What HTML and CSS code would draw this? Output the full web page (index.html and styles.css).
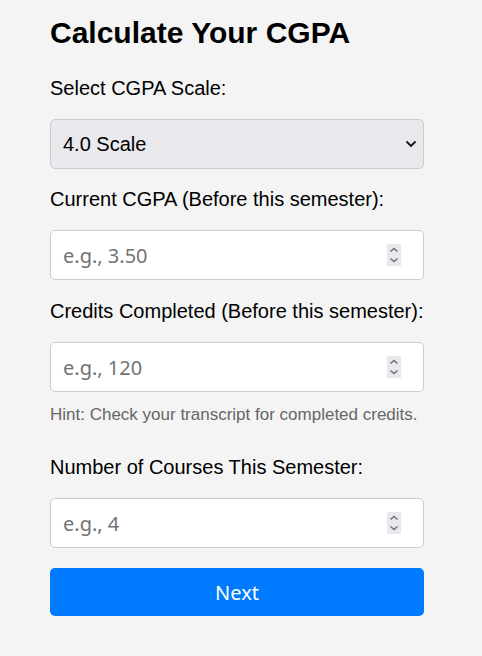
FILE: index.html
```html
<!DOCTYPE html>
<html lang="en">
<head>
<meta charset="utf-8">
<title>Calculate Your CGPA</title>
<link rel="stylesheet" href="styles.css">
</head>
<body>
<main class="calc">
  <h2 class="calc-title">Calculate Your CGPA</h2>
  <div class="field field-select">
    <label class="field-label" for="scale">Select CGPA Scale:</label>
    <div class="control-wrap">
      <select id="scale" class="control select">
        <option>4.0 Scale</option>
        <option>5.0 Scale</option>
      </select>
      <svg class="select-arrow" width="12" height="8" viewBox="0 0 12 8" aria-hidden="true"><path d="M1.5 1.5 L6 6 L10.5 1.5" fill="none" stroke="#111" stroke-width="1.8"/></svg>
    </div>
  </div>
  <div class="field">
    <label class="field-label" for="cgpa">Current CGPA (Before this semester):</label>
    <div class="control-wrap">
      <input id="cgpa" class="control" type="number" placeholder="e.g., 3.50">
      <span class="spinner" aria-hidden="true"><svg width="14" height="22" viewBox="0 0 14 22"><path d="M3.5 7.5 L7 4.5 L10.5 7.5 M3.5 14.5 L7 17.5 L10.5 14.5" fill="none" stroke="#707078" stroke-width="1.5"/></svg></span>
    </div>
  </div>
  <div class="field">
    <label class="field-label" for="credits">Credits Completed (Before this semester):</label>
    <div class="control-wrap">
      <input id="credits" class="control" type="number" placeholder="e.g., 120">
      <span class="spinner" aria-hidden="true"><svg width="14" height="22" viewBox="0 0 14 22"><path d="M3.5 7.5 L7 4.5 L10.5 7.5 M3.5 14.5 L7 17.5 L10.5 14.5" fill="none" stroke="#707078" stroke-width="1.5"/></svg></span>
    </div>
    <p class="hint">Hint: Check your transcript for completed credits.</p>
  </div>
  <div class="field">
    <label class="field-label" for="courses">Number of Courses This Semester:</label>
    <div class="control-wrap">
      <input id="courses" class="control" type="number" placeholder="e.g., 4">
      <span class="spinner" aria-hidden="true"><svg width="14" height="22" viewBox="0 0 14 22"><path d="M3.5 7.5 L7 4.5 L10.5 7.5 M3.5 14.5 L7 17.5 L10.5 14.5" fill="none" stroke="#707078" stroke-width="1.5"/></svg></span>
    </div>
  </div>
  <button class="next-btn" type="button">Next</button>
</main>
</body>
</html>
```

FILE: styles.css
```css
html, body {
  margin: 0;
  padding: 0;
  background: #f4f4f4;
}
body {
  font-family: "Liberation Sans", Arial, sans-serif;
  color: #000;
}
.calc {
  width: 374px;
  margin-left: 50px;
  padding-top: 15px;
  display: flex;
  flex-direction: column;
}
.calc-title {
  font-size: 30px;
  font-weight: bold;
  margin: 0 0 25px;
  line-height: 36px;
}
.field {
  display: flex;
  flex-direction: column;
  margin-bottom: 19px;
}
.field-select {
  margin-bottom: 18px;
}
.field-label {
  font-size: 20px;
  line-height: 24px;
  margin-bottom: 19px;
}
.control-wrap {
  position: relative;
  height: 50px;
}
.control {
  box-sizing: border-box;
  height: 50px;
  width: 100%;
  border: 1px solid #ccc;
  border-radius: 5px;
  font-family: "Noto Sans", sans-serif;
  font-size: 20px;
  padding: 0 12px;
  background: #fff;
  color: #000;
  -moz-appearance: textfield;
  appearance: textfield;
}
.control::-webkit-outer-spin-button,
.control::-webkit-inner-spin-button {
  -webkit-appearance: none;
  margin: 0;
}
.control::placeholder {
  color: #737373;
}
.select {
  -webkit-appearance: none;
  appearance: none;
  background: #e9e9ed;
  font-family: "Liberation Sans", Arial, sans-serif;
  font-size: 20px;
  padding: 0 12px;
}
.select-arrow {
  position: absolute;
  right: 7px;
  top: 21px;
  pointer-events: none;
}
.spinner {
  position: absolute;
  right: 23px;
  top: 14px;
  width: 14px;
  height: 22px;
  background: #e9e9ed;
  display: flex;
  pointer-events: none;
}
.hint {
  font-size: 17px;
  color: #666;
  margin: 13px 0 11px;
  line-height: 20px;
}
.next-btn {
  height: 48px;
  border: none;
  border-radius: 5px;
  background: #007bff;
  color: #fff;
  font-family: "Noto Sans", sans-serif;
  font-size: 20px;
  padding-top: 2px;
  width: 100%;
  margin-top: 1px;
}
```
